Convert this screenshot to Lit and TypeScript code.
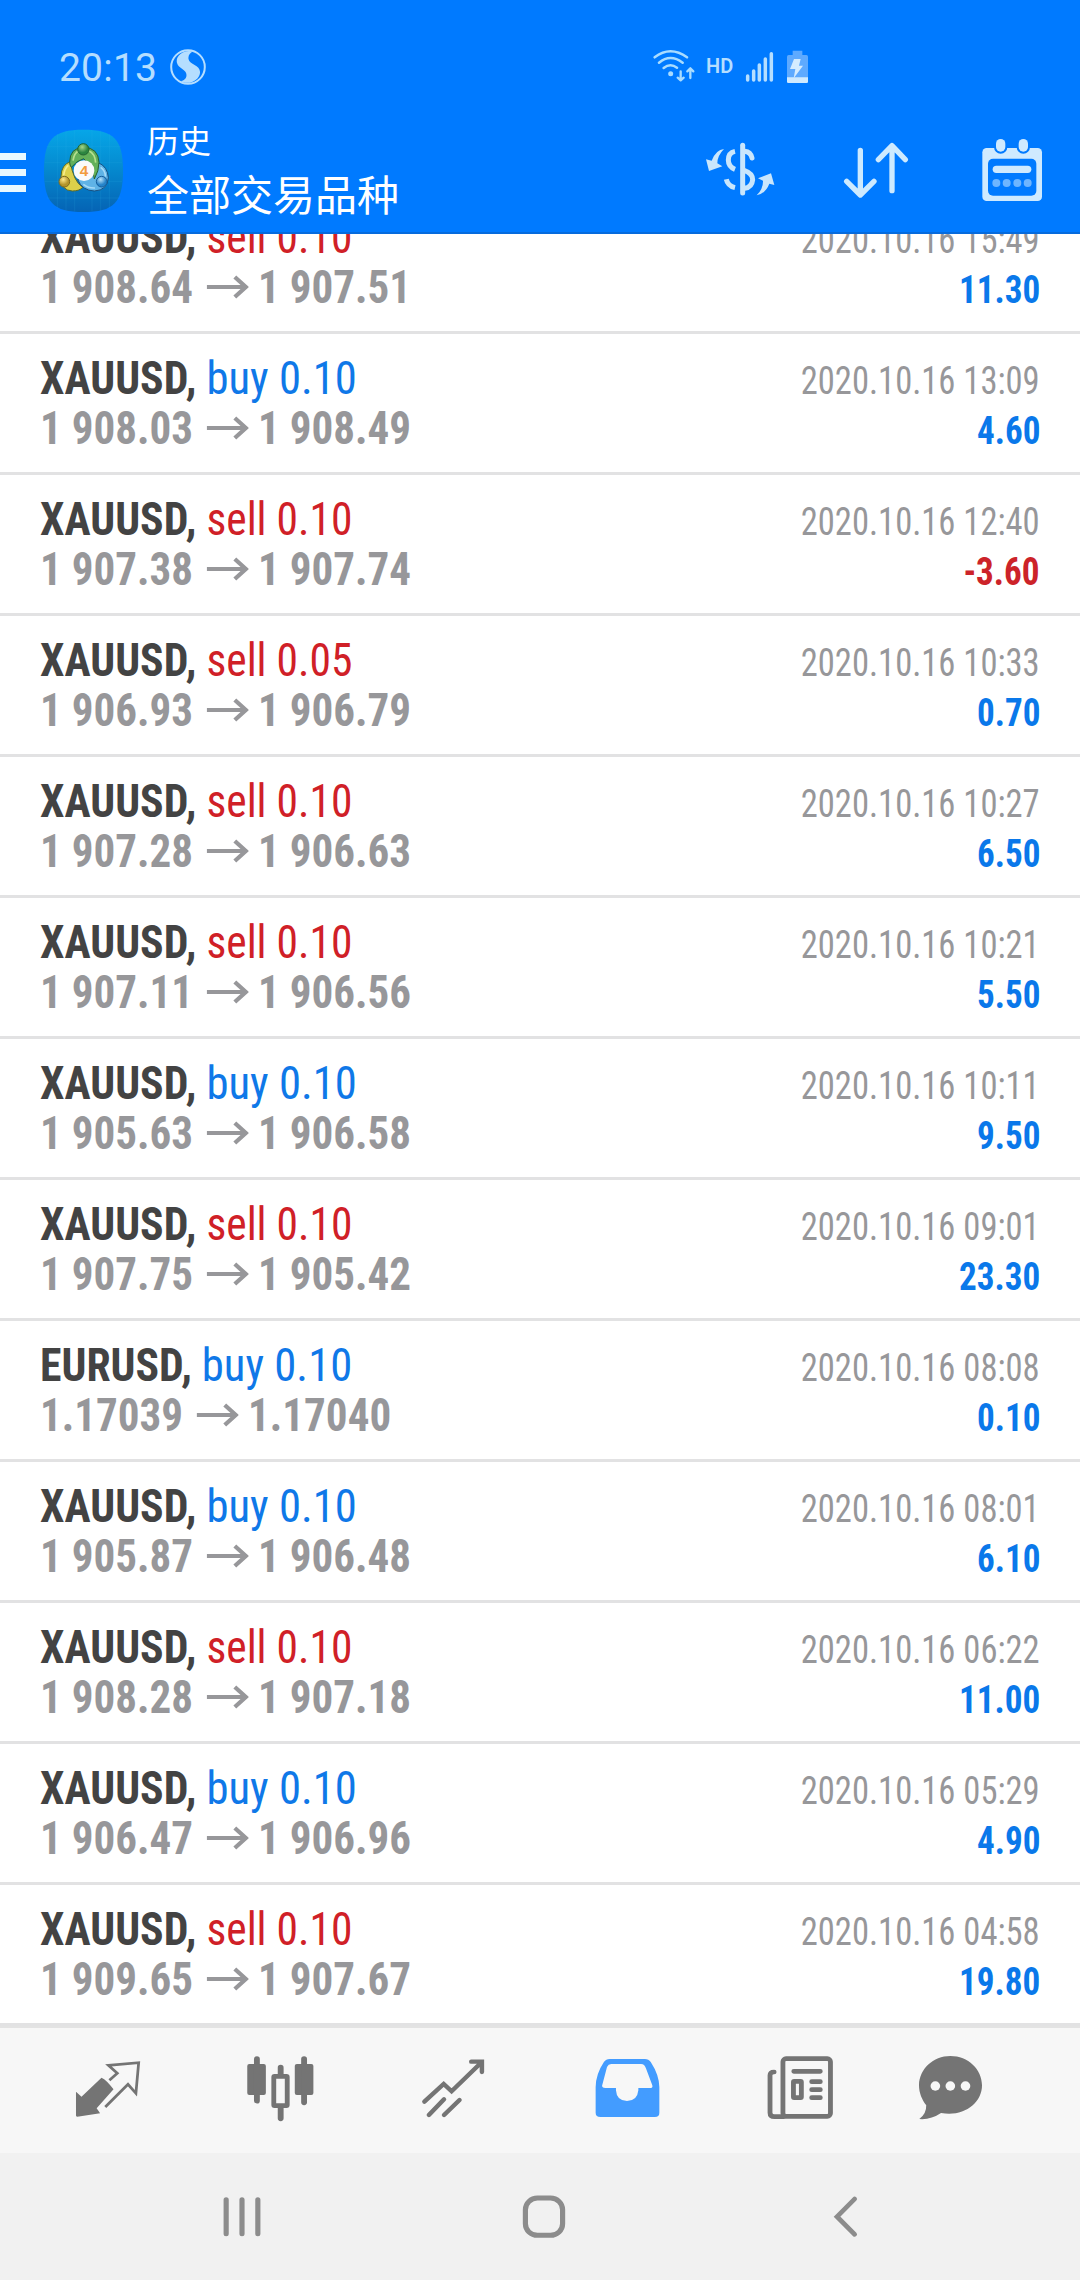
import { LitElement, html, css, svg } from "lit";
import { customElement } from "lit/decorators.js";
import { classMap } from "lit/directives/class-map.js";

interface Deal {
  symbol: string;
  side: "buy" | "sell";
  volume: string;
  open: string;
  close: string;
  time: string;
  profit: string;
}

const deal = (
  symbol: string,
  side: "buy" | "sell",
  volume: string,
  open: string,
  close: string,
  time: string,
  profit: string
): Deal => ({ symbol, side, volume, open, close, time, profit });

const DEALS: Deal[] = [
  deal("XAUUSD", "sell", "0.10", "1 908.64", "1 907.51", "2020.10.16 15:49", "11.30"),
  deal("XAUUSD", "buy", "0.10", "1 908.03", "1 908.49", "2020.10.16 13:09", "4.60"),
  deal("XAUUSD", "sell", "0.10", "1 907.38", "1 907.74", "2020.10.16 12:40", "-3.60"),
  deal("XAUUSD", "sell", "0.05", "1 906.93", "1 906.79", "2020.10.16 10:33", "0.70"),
  deal("XAUUSD", "sell", "0.10", "1 907.28", "1 906.63", "2020.10.16 10:27", "6.50"),
  deal("XAUUSD", "sell", "0.10", "1 907.11", "1 906.56", "2020.10.16 10:21", "5.50"),
  deal("XAUUSD", "buy", "0.10", "1 905.63", "1 906.58", "2020.10.16 10:11", "9.50"),
  deal("XAUUSD", "sell", "0.10", "1 907.75", "1 905.42", "2020.10.16 09:01", "23.30"),
  deal("EURUSD", "buy", "0.10", "1.17039", "1.17040", "2020.10.16 08:08", "0.10"),
  deal("XAUUSD", "buy", "0.10", "1 905.87", "1 906.48", "2020.10.16 08:01", "6.10"),
  deal("XAUUSD", "sell", "0.10", "1 908.28", "1 907.18", "2020.10.16 06:22", "11.00"),
  deal("XAUUSD", "buy", "0.10", "1 906.47", "1 906.96", "2020.10.16 05:29", "4.90"),
  deal("XAUUSD", "sell", "0.10", "1 909.65", "1 907.67", "2020.10.16 04:58", "19.80"),
];

@customElement("status-bar")
class StatusBar extends LitElement {
  static styles = css`
    :host {
      display: flex;
      align-items: center;
      height: 92px;
      padding: 40px 0 0 59px;
      box-sizing: border-box;
      color: #b5deff;
      font-family: Roboto, sans-serif;
    }
    .clock {
      font-size: 39px;
      line-height: 46px;
      padding-top: 4px;
      width: 111px;
      letter-spacing: 0.2px;
      white-space: nowrap;
    }
    .badge { width: 36px; height: 36px; margin-top: 1px; }
    .wifi { width: 44px; height: 36px; margin: -2px 0 0 446px; }
    .hd { font-size: 20px; font-weight: 600; margin-left: 10px; width: 39px; line-height: 24px; }
    .cells { width: 30px; height: 36px; margin-top: -2px; }
    .battery { width: 23px; height: 36px; margin: -2px 0 0 11px; }
  `;
  render() {
    return html`
      <span class="clock">20:13</span>
      <svg class="badge" viewBox="-18 -18 36 36">
        <circle r="16.8" fill="none" stroke="#b5deff" stroke-width="2" />
        <path d="M5-15.500C-4-18-13-11-11-4C-9.500 2-1.500 2-1.500 8C-1.500 12-5 14-8 14C2 19 11 13 12 6C13-2 1.500-2 .5-8C0-12 2-14 5-15.500Z" fill="#b5deff" />
      </svg>
      <svg class="wifi" viewBox="95 50 132 108" fill="none" stroke="#a9dcff" stroke-width="7.500" stroke-linecap="round" stroke-linejoin="round">
        <path d="M103 81Q150 45 200 81M116 97Q150 69 187 97M130 113Q150 97 170 112" />
        <circle cx="151" cy="130" r="7.5" fill="#a9dcff" stroke="none" />
        <path d="M181 123V149M172 142L181 150L190 142M210 143V115M201 123L210 114L219 123" stroke-width="7" />
      </svg>
      <span class="hd">HD</span>
      <svg class="cells" viewBox="378 50 90 108" stroke="#b5deff" stroke-width="10.500" stroke-linecap="round">
        <path d="M386 137V149M404 122V149M421 104V149M439 86V149M457 70V149" />
      </svg>
      <svg class="battery" viewBox="501 50 69 108">
        <path d="M521 61h29v13h12q5 0 5 5v75q0 4-5 4h-53q-5 0-5-4V79q0-5 5-5h12z" fill="#5eaaff" />
        <path d="M504 141h63v13q0 4-5 4h-53q-5 0-5-4z" fill="#cfeaff" />
        <path d="M525 86h20l-5 20h12l-28 38 5-28h-16z" fill="#d5ecff" />
      </svg>
    `;
  }
}

@customElement("app-header")
class AppHeader extends LitElement {
  static styles = css`
    :host {
      display: flex;
      height: 142px;
      box-sizing: border-box;
      border-bottom: 2px solid #066bdd;
      color: #fff;
      font-family: Roboto, "Noto Sans CJK SC", sans-serif;
    }
    .menu { width: 27px; height: 140px; }
    .logo { width: 84px; height: 140px; margin-left: 15px; }
    .titles { display: flex; flex-direction: column; width: 574px; padding: 30px 0 0 21px; box-sizing: border-box; }
    .section { font-size: 32px; line-height: 40px; font-weight: 400; }
    .filter { font-size: 42px; line-height: 60px; margin-top: 5px; font-weight: 400; }
    .actions { display: flex; }
    .action { width: 80px; height: 140px; }
    .action + .action { margin-left: 56px; }
  `;
  render() {
    return html`
      <svg class="menu" viewBox="0 92 27 140" fill="#e8f8ff">
        <path d="M0 153h26v7H0zM0 169h26v7H0zM0 185h26v7H0z" />
      </svg>
      <svg class="logo" viewBox="36 -54 252 420">
        <defs>
          <linearGradient id="tile" x1="0" y1="0" x2="0" y2="1">
            <stop offset="0" stop-color="#06a6e8" /><stop offset=".45" stop-color="#058bd0" /><stop offset="1" stop-color="#0563b4" />
          </linearGradient>
          <radialGradient id="green" cx=".4" cy=".3"><stop offset="0" stop-color="#a6d68a" /><stop offset="1" stop-color="#2c8540" /></radialGradient>
          <radialGradient id="gold" cx=".4" cy=".3"><stop offset="0" stop-color="#ffe98a" /><stop offset="1" stop-color="#b2932a" /></radialGradient>
          <radialGradient id="blue" cx=".4" cy=".3"><stop offset="0" stop-color="#b9e2f8" /><stop offset="1" stop-color="#2583c9" /></radialGradient>
        </defs>
        <path d="M160 59C252 59 279 88 279 182C279 277 252 306 160 306C69 306 42 277 42 182C42 88 69 59 160 59Z" fill="url(#tile)" />
        <path d="M82 72V294M108 62V302M134 60V304M186 60V304M212 62V302M238 72V294M50 110H272M44 158H276M44 214H276M50 264H272" stroke="#39b9ec" stroke-opacity=".22" stroke-width="2" />
        <g stroke-width="3">
          <path d="M121 155Q94 164 93 199Q92 242 127 243Q149 243 158 232Q130 214 121 155Z" fill="#dcd04a" stroke="#5f6a24" />
          <path d="M205 158Q233 170 235 203Q233 241 193 243Q157 242 143 209Q190 205 205 158Z" fill="#5fb3e6" stroke="#174f7f" />
          <path d="M119 157Q119 113 161 112Q205 113 207 157Q207 183 193 207Q190 172 161 146Q140 152 124 172Q119 166 119 157Z" fill="#63b05a" stroke="#255f33" />
          <path d="M129 152Q133 127 147 122M176 122Q195 130 197 158" fill="none" stroke="#b6e08f" stroke-width="5" />
          <path d="M101 196Q103 176 115 166" fill="none" stroke="#f6ee8d" stroke-width="5" />
          <path d="M212 172Q227 183 226 200M160 223Q176 235 195 234" fill="none" stroke="#a5daf7" stroke-width="5" />
          <circle cx="160" cy="118" r="17" fill="url(#green)" stroke="#20632f" />
          <circle cx="103" cy="215" r="16" fill="url(#gold)" stroke="#806b20" />
          <circle cx="215" cy="215" r="16" fill="url(#blue)" stroke="#175e9b" />
        </g>
        <circle cx="162" cy="182" r="31" fill="#fafafa" />
        <text x="162" y="198" text-anchor="middle" font-family="Liberation Sans, sans-serif" font-weight="bold" font-size="46" fill="#f29b3e">4</text>
      </svg>
      <div class="titles">
        <span class="section">历史</span>
        <span class="filter">全部交易品种</span>
      </div>
      <div class="actions">
        <svg class="action" viewBox="240 186 240 420">
          <g fill="none" stroke="#c9e6fc" stroke-width="15">
            <path d="M345 364Q325 368 325 390Q325 410 345 418" />
            <path d="M319 448Q323 468 345 473" />
            <path d="M374 364Q392 366 396 384" stroke-linecap="round" />
            <path d="M372 421Q398 430 398 449Q396 471 374 475" />
            <path d="M368 346V489" stroke-linecap="round" />
          </g>
          <path d="M312 357Q288 359 275 392L258 388L267 423L307 409L292 400Q292 377 312 357Z" fill="#c9e6fc" />
          <path d="M410 496Q437 490 448 461L463 465L453 430L414 445L429 452Q430 476 410 496Z" fill="#c9e6fc" />
        </svg>
        <svg class="action" viewBox="648 186 240 420" fill="none" stroke="#cdeaff" stroke-width="16" stroke-linecap="round" stroke-linejoin="round">
          <path d="M721 361V493M680 454L721 495L762 454M816 482V349M775 389L816 347L856 389" />
        </svg>
        <svg class="action" viewBox="1056 186 240 420">
          <rect x="1087" y="354" width="179" height="159" rx="13" fill="#cfeaff" />
          <rect x="1104" y="386" width="145" height="111" rx="15" fill="#007aff" />
          <rect x="1128" y="327" width="28" height="38" rx="14" fill="#cfeaff" stroke="#007aff" stroke-width="12" paint-order="stroke" />
          <rect x="1196" y="327" width="28" height="38" rx="14" fill="#cfeaff" stroke="#007aff" stroke-width="12" paint-order="stroke" />
          <rect x="1118" y="407" width="116" height="22" rx="11" fill="#cfeaff" />
          <g fill="#6eb5ff"><circle cx="1129" cy="459" r="12" /><circle cx="1160" cy="459" r="12" /><circle cx="1192" cy="459" r="12" /><circle cx="1223" cy="459" r="12" /></g>
        </svg>
      </div>
    `;
  }
}

@customElement("deal-list")
class DealList extends LitElement {
  static styles = css`
    :host {
      display: flex;
      flex-direction: column;
      justify-content: flex-end;
      height: 1792px;
      overflow: hidden;
      background: #fff;
      font-family: Roboto, sans-serif;
      font-stretch: 75%;
    }
    .deal {
      flex: none;
      height: 141px;
      box-sizing: border-box;
      padding: 19px 40px 0;
      border-bottom: 3px solid #e2e2e3;
    }
    .line { display: flex; align-items: baseline; justify-content: space-between; height: 50px; line-height: 50px; white-space: nowrap; }
    .main { font-size: 47px; transform: scaleX(0.93); transform-origin: 0 0; }
    .symbol { font-weight: 700; color: #434343; }
    .buy, .sell { display: inline-block; transform-origin: 0 0; font-weight: 430; }
    .buy { color: #0f78e8; transform: scaleX(1.022); }
    .sell { color: #d02027; transform: scaleX(0.994); }
    .prices { font-weight: 700; color: #97979a; transform: scaleX(0.916); }
    .arrow { width: 46px; height: 24px; margin: 0 10.5px 0 14.5px; vertical-align: 4px; }
    .time, .profit { font-size: 39px; transform-origin: 100% 0; }
    .time { color: #97979a; font-weight: 430; transform: scaleX(0.886); }
    .profit { font-weight: 700; color: #0a78ea; transform: scaleX(0.9); }
    .profit.loss { color: #cc2329; }
  `;
  render() {
    return DEALS.map(
      (d) => html`
        <div class="deal">
          <div class="line">
            <span class="main"><span class="symbol">${d.symbol},</span> <span class=${d.side}>${d.side} ${d.volume}</span></span>
            <span class="time">${d.time}</span>
          </div>
          <div class="line">
            <span class="main prices">${d.open}<svg class="arrow" viewBox="0 0 42 24" preserveAspectRatio="none" fill="none" stroke="#97979a" stroke-width="4.2"><path d="M0 12H39M28 2L39 12L28 22" /></svg>${d.close}</span>
            <span class=${classMap({ profit: true, loss: d.profit.startsWith("-") })}>${d.profit}</span>
          </div>
        </div>
      `
    );
  }
}

const TABS = [
  {
    center: 312,
    art: svg`<path d="M221 275L237 290L295 233Q310 240 330 268L281 325L291 340L225 350Q220 350 221 345Z" fill="#747474"/>
      <path d="M318 241L341 220L315 196L403 188L395 280L372 253L306 321" fill="none" stroke="#747474" stroke-width="8"/>`,
  },
  {
    center: 813,
    art: svg`<g fill="#747474"><rect x="717" y="192" width="54" height="93" rx="6"/><rect x="855" y="192" width="54" height="93" rx="6"/></g>
      <rect x="794" y="229" width="39" height="88" rx="2" fill="none" stroke="#747474" stroke-width="14"/>
      <path d="M745 177V302M882 177V307M814 203V224M814 322V355" stroke="#747474" stroke-width="17" stroke-linecap="round"/>`,
  },
  {
    center: 1316,
    art: svg`<path d="M1232 305L1288 252L1311 274L1398 187M1368 185H1399V216M1245 345L1289 298M1289 345L1334 300" fill="none" stroke="#747474" stroke-width="13" stroke-linecap="round" stroke-linejoin="miter"/>`,
  },
  {
    center: 253,
    art: svg`<path fill-rule="evenodd" fill="#439cff" d="M202 177H304Q315 177 321 186Q346 226 346 262V338Q346 351 333 351H175Q161 351 161 338V262Q161 223 185 186Q191 177 202 177ZM206 192Q198 192 194 201L181 252Q176 264 190 264H220V271Q222 303 252 303Q282 303 285 271V264H318Q329 264 325 254L307 205Q303 192 293 192Z"/>`,
  },
  {
    center: 760,
    art: svg`<g fill="none" stroke="#747474" stroke-width="14" stroke-linecap="round">
      <rect x="709.500" y="176" width="138" height="173" rx="9"/><path d="M684 216Q672 216 672 226V338Q672 350 685 350H712" /><rect x="740" y="244" width="23" height="49" rx="2"/>
      <path d="M741 214H818M793 245H818M793 269H818M793 293H818"/></g>`,
  },
  {
    center: 1193,
    art: svg`<path d="M1193 168C1245 168 1285 208 1285 256C1285 311 1230 352 1166 339Q1136 360 1103 357Q1124 341 1123 316C1111 299 1102 280 1102 255C1103 207 1143 168 1193 168Z" fill="#747474"/>
      <g fill="#f7f7f7"><circle cx="1149.500" cy="258" r="14"/><circle cx="1193" cy="258" r="14"/><circle cx="1237" cy="258" r="14"/></g>`,
  },
];

@customElement("tab-bar")
class TabBar extends LitElement {
  static styles = css`
    :host {
      display: flex;
      height: 127px;
      box-sizing: border-box;
      padding-left: 66px;
      gap: 90.2px;
      border-top: 2px solid #e3e3e3;
      background: #f7f7f7;
    }
    .tab { flex: none; width: 83px; height: 125px; }
    .tab:last-child { margin-left: -23px; }
  `;
  render() {
    return TABS.map(
      (t) => html`<svg class="tab" preserveAspectRatio="none" viewBox="${t.center - 120} 84 241 375">${t.art}</svg>`
    );
  }
}

@customElement("nav-bar")
class NavBar extends LitElement {
  static styles = css`
    :host {
      display: flex;
      height: 127px;
      padding-left: 91px;
      background: #f1f1f1;
    }
    .key { width: 302px; height: 127px; }
  `;
  render() {
    return html`
      <svg class="key" preserveAspectRatio="none" viewBox="264.500 460 877 381" stroke="#8c8c8c" stroke-width="15" stroke-linecap="round">
        <path d="M657 600V702M703 600V702M749 600V702" />
      </svg>
      <svg class="key" preserveAspectRatio="none" viewBox="-426.500 460 877 381" fill="none" stroke="#8c8c8c" stroke-width="15">
        <rect x="-42" y="595" width="108" height="112" rx="35" />
      </svg>
      <svg class="key" preserveAspectRatio="none" viewBox="451.500 460 877 381" fill="none" stroke="#8c8c8c" stroke-width="14" stroke-linecap="round">
        <path d="M915 598L864 651L915 704" />
      </svg>
    `;
  }
}

@customElement("app-root")
class AppRoot extends LitElement {
  static styles = css`
    :host {
      display: flex;
      flex-direction: column;
      width: 1080px;
      height: 2280px;
      overflow: hidden;
      background: #fff;
    }
    .top { background: #007aff; }
  `;
  render() {
    return html`
      <div class="top">
        <status-bar></status-bar>
        <app-header></app-header>
      </div>
      <deal-list></deal-list>
      <tab-bar></tab-bar>
      <nav-bar></nav-bar>
    `;
  }
}
